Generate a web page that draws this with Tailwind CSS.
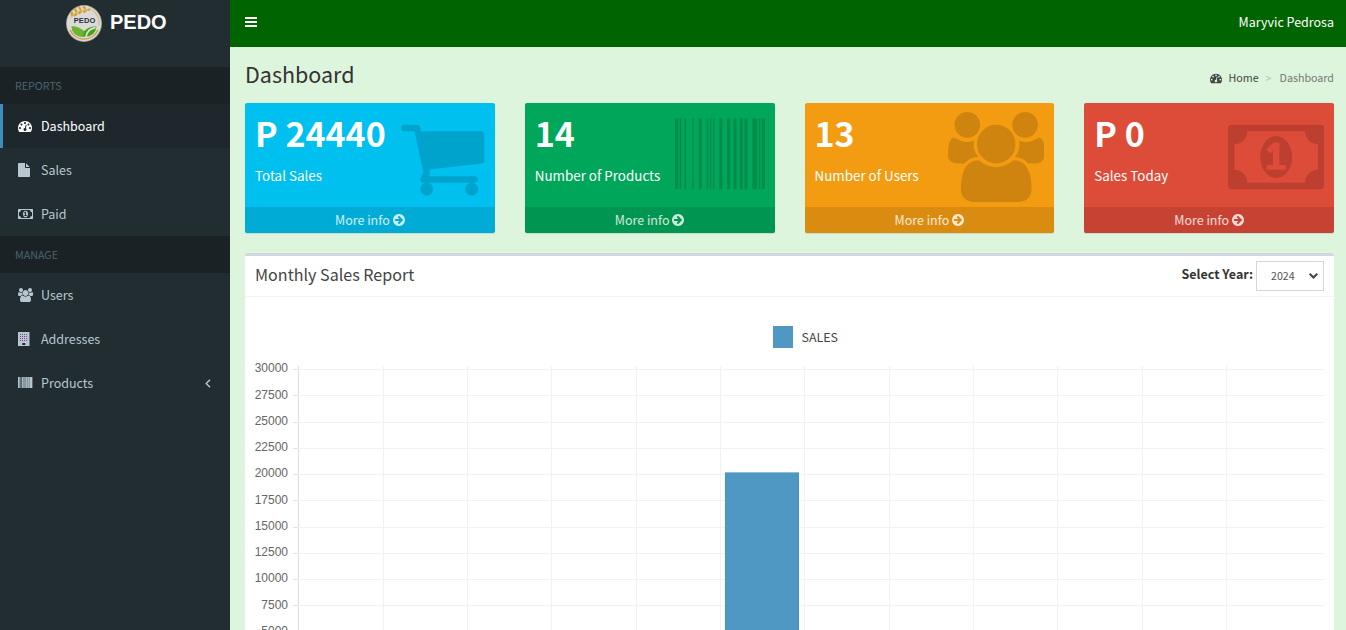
<!DOCTYPE html>
<html lang="en">
<head>
<meta charset="utf-8">
<title>Dashboard</title>
<script src="https://cdn.jsdelivr.net/npm/@tailwindcss/browser@4"></script>
</head>
<body class="w-[1346px] h-[630px] overflow-hidden bg-[#ddf5dc] text-[#333] font-['Noto_Sans_CJK_SC','Noto_Sans_CJK_JP',sans-serif] text-[12.5px] leading-5">
<svg class="hidden">
  <symbol id="dash" viewBox="0 0 1792 1792"><path d="M384 1152q0-53-37.5-90.5t-90.5-37.5-90.5 37.5-37.5 90.5 37.5 90.5 90.5 37.5 90.5-37.5 37.5-90.5zm192-448q0-53-37.5-90.5t-90.5-37.5-90.5 37.5-37.5 90.5 37.5 90.5 90.5 37.5 90.5-37.5 37.5-90.5zm428 481l101-382q6-26-7.5-48.5t-38.5-29.5-48 6.5-30 39.5l-101 382q-60 5-107 43.5t-63 98.5q-20 77 20 146t117 89 146-20 89-117q16-60-6-117t-72-91zm660-33q0-53-37.5-90.5t-90.5-37.5-90.5 37.5-37.5 90.5 37.5 90.5 90.5 37.5 90.5-37.5 37.5-90.5zm-640-640q0-53-37.5-90.5t-90.5-37.5-90.5 37.5-37.5 90.5 37.5 90.5 90.5 37.5 90.5-37.5 37.5-90.5zm448 192q0-53-37.5-90.5t-90.5-37.5-90.5 37.5-37.5 90.5 37.5 90.5 90.5 37.5 90.5-37.5 37.5-90.5zm320 448q0 261-141 483-19 29-54 29h-1402q-35 0-54-29-141-221-141-483 0-182 71-348t191-286 286-191 348-71 348 71 286 191 191 286 71 348z"/></symbol>
  <symbol id="file" viewBox="0 0 1792 1792"><path d="M1024 512v-472q22 14 36 28l408 408q14 14 28 36h-472zm-128 32q0 40 28 68t68 28h544v1056q0 40-28 68t-68 28h-1344q-40 0-68-28t-28-68v-1600q0-40 28-68t68-28h800v544z"/></symbol>
  <symbol id="money" viewBox="0 0 1920 1792"><path d="M768 1152h384v-96h-128v-448h-114l-148 137 77 80q42-37 55-57h2v288h-128v96zm512-256q0 70-21 142t-59.5 134-101.5 101-138 39-138-39-101.5-101-59.5-134-21-142 21-142 59.5-134 101.5-101 138-39 138 39 101.5 101 59.5 134 21 142zm512 256v-512q-106 0-181-75t-75-181h-1152q0 106-75 181t-181 75v512q106 0 181 75t75 181h1152q0-106 75-181t181-75zm128-832v1152q0 26-19 45t-45 19h-1792q-26 0-45-19t-19-45v-1152q0-26 19-45t45-19h1792q26 0 45 19t19 45z"/></symbol>
  <symbol id="users" viewBox="64 0 1920 1792"><path d="M657 896q-162 5-265 128h-134q-82 0-138-40.5t-56-118.5q0-353 124-353 6 0 43.5 21t97.5 42.5 119 21.5q67 0 133-23-5 37-5 66 0 159 97 256zm1071 637q0 120-73 189.5t-194 69.5h-874q-121 0-194-69.5t-73-189.5q0-53 3.5-103.5t14-109 26.5-108.5 43-97.5 62-81 85.5-53.5 111.5-20q10 0 43 21.5t73 48 107 48 135 21.5 135-21.5 107-48 73-48 43-21.5q61 0 111.5 20t85.5 53.5 62 81 43 97.5 26.5 108.5 14 109 3.5 103.5zm-1024-1277q0 106-75 181t-181 75-181-75-75-181 75-181 181-75 181 75 75 181zm704 384q0 159-112.5 271.5t-271.5 112.5-271.5-112.5-112.5-271.5 112.5-271.5 271.5-112.5 271.5 112.5 112.5 271.5zm576 225q0 78-56 118.5t-138 40.5h-134q-103-123-265-128 97-97 97-256 0-29-5-66 66 23 133 23 59 0 119-21.5t97.5-42.5 43.5-21q124 0 124 353zm-128-609q0 106-75 181t-181 75-181-75-75-181 75-181 181-75 181 75 75 181z"/></symbol>
  <symbol id="barcode" viewBox="0 0 1792 1792"><path d="M0 128h63v1408h-63zM94 128h32v1408h-32zM189 128h31v1408h-31zM346 128h31v1408h-31zM472 128h62v1408h-62zM629 128h31v1408h-31zM692 128h31v1408h-31zM755 128h31v1408h-31zM880 128h63v1408h-63zM1037 128h63v1408h-63zM1163 128h63v1408h-63zM1288 128h63v1408h-63zM1383 128h63v1408h-63zM1541 128h94v1408h-94zM1666 128h32v1408h-32zM1729 128h63v1408h-63z"/></symbol>
  <symbol id="cart" viewBox="64 0 1664 1792"><path d="M704 1536q0 52-38 90t-90 38-90-38-38-90 38-90 90-38 90 38 38 90zm896 0q0 52-38 90t-90 38-90-38-38-90 38-90 90-38 90 38 38 90zm128-1088v512q0 24-16.5 42.5t-40.5 21.5l-1044 122q13 60 13 70 0 16-24 64h920q26 0 45 19t19 45-19 45-45 19h-1024q-26 0-45-19t-19-45q0-11 8-31.5t16-36 21.5-40 15.5-29.5l-177-823h-204q-26 0-45-19t-19-45 19-45 45-19h256q16 0 28.5 6.5t19.5 15.5 13 24.5 8 26 5.5 29.5 4.5 26h1201q26 0 45 19t19 45z"/></symbol>
  <symbol id="arrow" viewBox="128 128 1536 1536"><path d="M1413 896q0-27-18-45l-362-362-91-91q-18-18-45-18t-45 18l-91 91q-18 18-18 45t18 45l189 189h-502q-26 0-45 19t-19 45v128q0 26 19 45t45 19h502l-189 189q-19 19-19 45t19 45l91 91q18 18 45 18t45-18l91-91 362-362q18-18 18-45zm251 0q0 209-103 385.5t-279.5 279.5-385.5 103-385.5-103-279.5-279.5-103-385.5 103-385.5 279.5-279.5 385.5-103 385.5 103 279.5 279.5 103 385.5z"/></symbol>
</svg>
<div class="flex h-full">
  <aside class="w-[230px] shrink-0 bg-[#222d32] text-[#b8c7ce]">
    <div class="flex h-[67px] pl-[66px] pt-[5px]">
      <svg class="h-[37px] w-9" viewBox="0 0 36 36" preserveAspectRatio="none">
        <circle cx="18" cy="18" r="18" fill="#9d9d96"/>
        <circle cx="18" cy="18" r="17.200" fill="#dadad8"/>
        <path d="M4 24A15.300 15.300 0 0 0 32 24" fill="none" stroke="#d39a2c" stroke-width="1.300"/>
        <path d="M26 5A15.300 15.300 0 0 1 33 20" fill="none" stroke="#d9b56c" stroke-width="1.100"/>
        <path d="M4.500 13Q9 5 23 4.500" stroke="#d9a43c" stroke-width=".8" fill="none"/>
        <g fill="#d99f2e"><ellipse cx="5.800" cy="8.500" rx="1.300" ry="2.500" transform="rotate(-5 5.800 8.500)"/><ellipse cx="9.500" cy="5" rx="1.300" ry="2.400" transform="rotate(-20 9.500 5)"/><ellipse cx="13.800" cy="3.300" rx="1.200" ry="2.200" transform="rotate(-35 13.800 3.300)"/><ellipse cx="18.300" cy="2.600" rx="1.200" ry="2" transform="rotate(-50 18.300 2.600)"/><ellipse cx="9.500" cy="9.500" rx="1.200" ry="2.300" transform="rotate(60 9.500 9.500)"/><ellipse cx="14" cy="7.300" rx="1.200" ry="2.200" transform="rotate(55 14 7.300)"/><ellipse cx="18.800" cy="6.300" rx="1.200" ry="2.200" transform="rotate(60 18.800 6.300)"/><ellipse cx="23" cy="4.500" rx="1" ry="2" transform="rotate(80 23 4.500)"/></g>
        <path d="M5.500 21Q12 20.500 18 25.500Q23 20.500 30.500 21Q29.500 31 18 31Q6.500 31 5.500 21z" fill="#4a9f1c"/>
        <path d="M5.500 21Q12 20.500 18 25.500Q18 29 16 31Q6.500 30 5.500 21z" fill="#6db52f"/>
        <path d="M20 31Q21 23.500 29.500 22" stroke="#e2e6dc" stroke-width="1.600" fill="none"/>
        <text x="18.500" y="17.800" text-anchor="middle" font-family="Liberation Sans" font-weight="700" font-size="7.500" fill="#26323c" textLength="21.500">PEDO</text>
      </svg>
      <span class="ml-2 mt-[2px] font-['Liberation_Sans'] font-bold text-[20px] leading-[30px] text-white">PEDO</span>
    </div>
    <div class="h-[37px] bg-[#1a2226] pl-[15px] text-[10.7px] leading-[37px] text-[#4b646f]">REPORTS</div>
    <nav>
      <a class="flex h-11 items-center border-l-3 border-[#3c8dbc] bg-[#1e282c] pl-[15px] text-white"><span class="w-[23px]"><svg class="size-[14px] fill-current"><use href="#dash"/></svg></span>Dashboard</a>
      <a class="flex h-11 items-center pl-[18px]"><span class="w-[23px]"><svg class="size-[14px] fill-current"><use href="#file"/></svg></span>Sales</a>
      <a class="flex h-11 items-center pl-[18px]"><span class="w-[23px]"><svg class="h-[14px] w-[15px] fill-current"><use href="#money"/></svg></span>Paid</a>
    </nav>
    <div class="h-[37px] bg-[#1a2226] pl-[15px] text-[10.7px] leading-[37px] text-[#4b646f]">MANAGE</div>
    <nav>
      <a class="flex h-11 items-center pl-[18px]"><span class="w-[23px]"><svg class="h-[14px] w-[15px] fill-current"><use href="#users"/></svg></span>Users</a>
      <a class="flex h-11 items-center pl-[18px]"><span class="w-[23px]"><svg class="size-[14px]" viewBox="0 0 14 14"><path fill="#b8c7ce" d="M0 0h11.500v14h-11.500z"/><g stroke="#7b3f9b" stroke-width="1" stroke-dasharray="1 1"><path d="M2 2.500h8M2 4.500h8M2 6.500h8M2 8.500h8"/></g><path fill="#222d32" d="M4.300 11h3v2h-3z"/></svg></span>Addresses</a>
      <a class="flex h-11 items-center pl-[18px]"><span class="w-[23px]"><svg class="-mt-px h-[11px] w-[15px]" viewBox="0 0 15 11"><path fill="#87989f" d="M0 0h15v11H0z"/><path fill="#b8c7ce" d="M0 0h1v11H0zM12 0h2v11h-2z"/><path fill="#a3b3ba" d="M4 0h1v11H4zM8 0h1v11H8zM10 0h1v11h-1z"/><path fill="#3f7f86" d="M2 0h1v11H2z"/><path fill="#7d5a64" d="M3 0h1v11H3zM14 0h1v11h-1z"/></svg></span>Products<svg class="ml-auto mr-[19px] mt-px h-[9px] w-[6px]" viewBox="0 0 6 9" fill="none" stroke="currentColor" stroke-width="1.400"><path d="M5 .7L1.200 4.500L5 8.300"/></svg></a>
    </nav>
  </aside>
  <main class="min-w-0 flex-1">
    <header class="flex h-[47px] items-center bg-[#006400] pl-[15px] pr-3 text-white">
      <svg class="-mt-[3px] h-[10px] w-3" viewBox="0 0 12 10" fill="#fff"><path d="M0 0h12v2H0zM0 4h12v2H0zM0 8h12v2H0z"/></svg>
      <span class="-mt-[3px] ml-auto">Maryvic Pedrosa</span>
    </header>
    <section class="px-[15px] pr-3">
      <div class="flex h-14 items-center justify-between">
        <h1 class="-mt-[2px] text-[21.5px] leading-6">Dashboard</h1>
        <div class="mt-[6px] flex items-center text-[10.7px] text-[#444]"><svg class="mr-[7px] size-3 fill-current"><use href="#dash"/></svg>Home<span class="ml-[7px] mr-2 text-[#bbb]">&gt;</span><span class="text-[#777]">Dashboard</span></div>
      </div>
      <div class="grid grid-cols-4 gap-[30px]">
        <div class="flex h-[130px] flex-col overflow-hidden rounded-[2px] bg-[#00c0ef] text-white shadow-[0_1px_1px_rgba(0,0,0,.1)]">
          <div class="flex h-[104px] justify-between px-[10px]">
            <div><div class="mt-[9px] text-[34px] font-bold leading-[42px]">P 24440</div><p class="mt-[11px] text-[13.4px]">Total Sales</p></div>
            <svg class="mt-[9px] h-[90px] w-[83.6px] fill-black/15"><use href="#cart"/></svg>
          </div>
          <div class="flex h-[26px] items-center justify-center gap-[3px] bg-black/10 text-white/80">More info<svg class="size-3 fill-current"><use href="#arrow"/></svg></div>
        </div>
        <div class="flex h-[130px] flex-col overflow-hidden rounded-[2px] bg-[#00a65a] text-white shadow-[0_1px_1px_rgba(0,0,0,.1)]">
          <div class="flex h-[104px] justify-between px-[10px]">
            <div><div class="mt-[9px] text-[34px] font-bold leading-[42px]">14</div><p class="mt-[11px] text-[13.4px]">Number of Products</p></div>
            <svg class="mt-[9px] h-[90px] w-[90px] fill-black/15"><use href="#barcode"/></svg>
          </div>
          <div class="flex h-[26px] items-center justify-center gap-[3px] bg-black/10 text-white/80">More info<svg class="size-3 fill-current"><use href="#arrow"/></svg></div>
        </div>
        <div class="flex h-[130px] flex-col overflow-hidden rounded-[2px] bg-[#f39c12] text-white shadow-[0_1px_1px_rgba(0,0,0,.1)]">
          <div class="flex h-[104px] justify-between px-[10px]">
            <div><div class="mt-[9px] text-[34px] font-bold leading-[42px]">13</div><p class="mt-[11px] text-[13.4px]">Number of Users</p></div>
            <svg class="mt-[9px] h-[90px] w-[96.4px] fill-black/15"><use href="#users"/></svg>
          </div>
          <div class="flex h-[26px] items-center justify-center gap-[3px] bg-black/10 text-white/80">More info<svg class="size-3 fill-current"><use href="#arrow"/></svg></div>
        </div>
        <div class="flex h-[130px] flex-col overflow-hidden rounded-[2px] bg-[#dd4b39] text-white shadow-[0_1px_1px_rgba(0,0,0,.1)]">
          <div class="flex h-[104px] justify-between px-[10px]">
            <div><div class="mt-[9px] text-[34px] font-bold leading-[42px]">P 0</div><p class="mt-[11px] text-[13.4px]">Sales Today</p></div>
            <svg class="mt-[9px] h-[90px] w-[96.4px] fill-black/15"><use href="#money"/></svg>
          </div>
          <div class="flex h-[26px] items-center justify-center gap-[3px] bg-black/10 text-white/80">More info<svg class="size-3 fill-current"><use href="#arrow"/></svg></div>
        </div>
      </div>
      <div class="mt-5 h-[400px] rounded-t-[3px] border-t-3 border-[#d2d6de] bg-white">
        <div class="flex h-[41px] items-center justify-between border-b border-[#f4f4f4] px-[10px]">
          <h3 class="-mt-1 text-[16.1px] leading-5 text-[#444]">Monthly Sales Report</h3>
          <div class="flex items-center gap-[3px]"><b class="-mt-1">Select Year:</b>
            <span class="flex h-[30px] w-[68px] items-center justify-between border border-[#d2d6de] pl-[14px] pr-[5px] text-[10.7px] text-[#555]">2024<svg class="h-[6px] w-[9px]" viewBox="0 0 9 6" fill="none" stroke="#444" stroke-width="2"><path d="M.7 .8L4.500 4.500L8.300 .8"/></svg></span></div>
        </div>
        <svg id="chart" class="block h-[333px] w-[1089px]" viewBox="245 297 1089 333">
          <rect x="773" y="326" width="20" height="22" fill="#4f98c3"/>
          <text x="801.500" y="342" font-size="12" fill="#444" textLength="36.500" lengthAdjust="spacingAndGlyphs">SALES</text>
          <g id="grid" shape-rendering="crispEdges"></g>
          <g id="labels" font-family="Liberation Sans" font-size="12" fill="#666" text-anchor="end"></g>
          <rect x="725" y="472" width="74" height="170" fill="#4f98c3"/>
          <path d="M725.500 640V472.500H798.500V640" fill="none" stroke="#3c8dbc" stroke-opacity=".5"/>
          <path d="M725 472.500H799" stroke="#8fbdd9"/>
        </svg>
      </div>
    </section>
  </main>
</div>
<script>
  const ns = 'http://www.w3.org/2000/svg';
  const grid = document.getElementById('grid'), labels = document.getElementById('labels');
  const add = (parent, tag, attrs) => { const e = document.createElementNS(ns, tag); for (const k in attrs) e.setAttribute(k, attrs[k]); parent.appendChild(e); return e; };
  for (let i = 0; i < 12; i++) add(grid, 'rect', {x: Math.floor(298.7 + i * 84.35), y: 366, width: 1, height: 270, fill: i ? '#f2f2f2' : '#dedede'});
  const baselines = [372, 399, 425, 451, 477, 504, 530, 556, 582, 609, 635];
  [369, 395, 422, 448, 474, 500, 527, 553, 579, 605, 632].forEach((y, i) => {
    add(grid, 'rect', {x: 293, y, width: 1031, height: 1, fill: '#f2f2f2'});
    add(grid, 'rect', {x: 293, y, width: 5, height: 1, fill: '#e2e2e2'});
    add(labels, 'text', {x: 288, y: baselines[i]}).textContent = 30000 - i * 2500;
  });
</script>
</body>
</html>
